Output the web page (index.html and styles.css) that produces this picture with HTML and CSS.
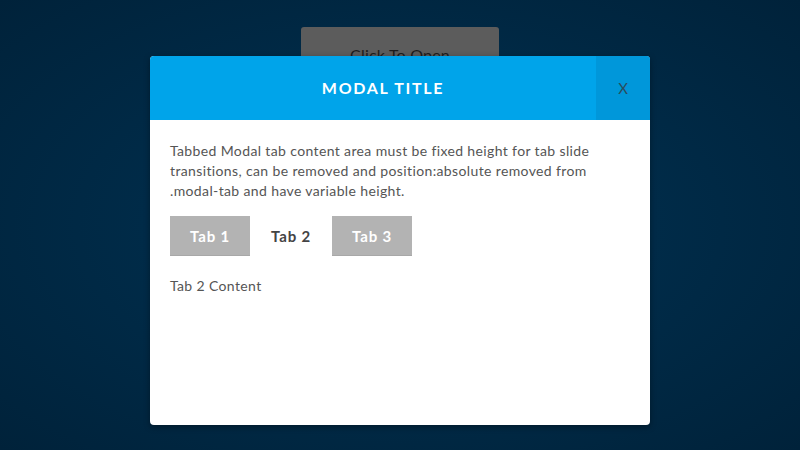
FILE: index.html
```html
<!DOCTYPE html>
<html>
<head>
<meta charset="utf-8">
<link rel="stylesheet" href="styles.css">
</head>
<body>
<div class="page">
  <button class="open-btn">Click To Open</button>
</div>
<div class="overlay">
  <div class="modal">
    <div class="modal-header">
      <div class="modal-title">MODAL TITLE</div>
      <div class="modal-close">X</div>
    </div>
    <div class="modal-body">
      <p class="intro">Tabbed Modal tab content area must be fixed height for tab slide transitions, can be removed and position:absolute removed from <span class="nowrap">.modal-tab</span> and have variable height.</p>
      <div class="tabs">
        <div class="tab">Tab 1</div>
        <div class="tab active">Tab 2</div>
        <div class="tab">Tab 3</div>
      </div>
      <div class="tab-content">Tab 2 Content</div>
    </div>
  </div>
</div>
</body>
</html>
```
FILE: styles.css
```css
html, body {
  margin: 0;
  padding: 0;
  width: 800px;
  height: 450px;
  overflow: hidden;
}
body {
  font-family: Lato, "Open Sans", sans-serif;
  background: radial-gradient(ellipse at 50% 50%, #003456 0%, #002b48 45%, #00223a 100%);
  position: relative;
}
.page {
  display: flex;
  justify-content: center;
  padding-top: 27px;
}
.open-btn {
  width: 198px;
  height: 56px;
  border: none;
  border-radius: 3px;
  background: #5c5c5c;
  color: #1c1c1c;
  font-family: Lato, sans-serif;
  font-size: 16px;
  letter-spacing: 0.2px;
  padding: 0;
  padding-bottom: 2px;
}
.overlay {
  position: absolute;
  left: 0;
  top: 0;
  width: 800px;
  height: 450px;
  display: flex;
  justify-content: center;
  padding-top: 56px;
  box-sizing: border-box;
}
.modal {
  width: 500px;
  height: 369px;
  background: #fff;
  border-radius: 4px;
  overflow: hidden;
  box-shadow: 0 2px 6px rgba(0,0,0,0.35);
  display: flex;
  flex-direction: column;
}
.modal-header {
  height: 64px;
  background: #00a4ea;
  display: flex;
}
.modal-title {
  flex: 1;
  display: flex;
  align-items: center;
  justify-content: center;
  color: #fff;
  font-weight: 700;
  font-size: 16px;
  letter-spacing: 1.7px;
  padding-left: 20px;
  padding-bottom: 1px;
}
.modal-close {
  width: 54px;
  display: flex;
  align-items: center;
  justify-content: center;
  background: #0097da;
  color: #2b4d5e;
  font-size: 15px;
}
.modal-body {
  padding: 21px 20px 20px 20px;
  color: #555;
  font-size: 14px;
  letter-spacing: 0.37px;
}
.nowrap {
  white-space: nowrap;
}
.intro {
  margin: 0;
  line-height: 20px;
}
.tabs {
  display: flex;
  gap: 1px;
  margin-top: 15px;
}
.tab {
  width: 80px;
  height: 40px;
  display: flex;
  align-items: center;
  justify-content: center;
  background: #b3b3b3;
  color: #fff;
  font-weight: 700;
  font-size: 15px;
  letter-spacing: 0.8px;
  box-shadow: inset 0 -1px 0 rgba(0,0,0,0.06);
}
.tab.active {
  background: #fff;
  color: #444;
  box-shadow: none;
}
.tab-content {
  margin-top: 20px;
  line-height: 20px;
}
```
